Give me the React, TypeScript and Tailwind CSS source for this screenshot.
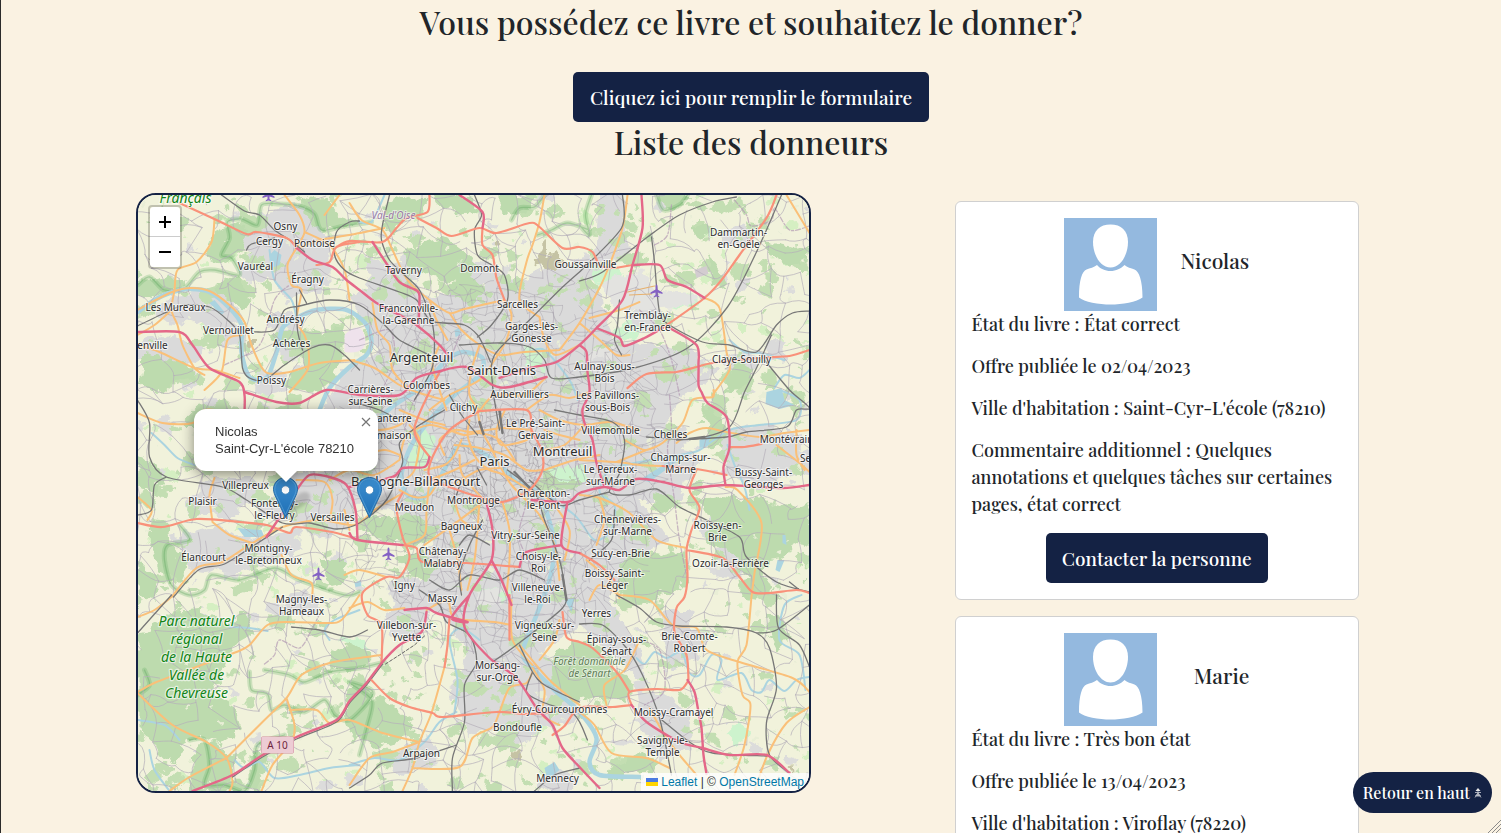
import React from "react";

type Point = [number, number];

const toPoints = (source: string): Point[] =>
  source.split(" ").map((pair) => pair.split(",").map(Number) as Point);

/** Smooth curve through all points (Catmull-Rom converted to cubic segments). */
const curve = (source: string): string => {
  const p = toPoints(source);
  let d = `M${p[0][0]},${p[0][1]}`;
  for (let i = 0; i < p.length - 1; i++) {
    const a = p[Math.max(0, i - 1)];
    const b = p[i];
    const c = p[i + 1];
    const e = p[Math.min(p.length - 1, i + 2)];
    d += `C${(b[0] + (c[0] - a[0]) / 7).toFixed(1)},${(b[1] + (c[1] - a[1]) / 7).toFixed(1)} ${(c[0] - (e[0] - b[0]) / 7).toFixed(1)},${(c[1] - (e[1] - b[1]) / 7).toFixed(1)} ${c[0]},${c[1]}`;
  }
  return d;
};

const curves = (sources: string[]) => sources.map(curve).join("");
const shapes = (sources: string[]) => sources.map((s) => `M${s.split(" ").join("L")}Z`).join("");

const makeRandom = (seed: number) => () => {
  seed = (seed * 1664525 + 1013904223) % 4294967296;
  return seed / 4294967296;
};

/* ---------- Map data ---------- */

const motorways = [
  "297,248 313,260 333,267 347,280 360,290 377,303 400,315 417,325 440,345 450,358",
  "460,195 483,212 483,228",
  "373,242 386,262 400,282 418,291 420,300 419,325",
  "642,195 643,228 633,265 623,300 597,328 580,345 557,362 530,368 500,378",
  "580,345 587,352 588,372 590,392 583,410 585,423 593,440 597,463 605,487",
  "633,265 660,265 668,280 687,287 705,298",
  "663,328 645,338 625,346 620,338 597,328",
  "670,328 697,345 699,365 699,385 702,392 708,403 727,417 730,447 724,467 726,485",
  "138,332 180,332 193,345 210,368 240,382 245,395 245,412",
  "245,392 277,402 300,403 327,390 360,395 400,395 417,378 437,372 467,367 493,385 510,387 547,377",
  "297,490 310,475 330,477 347,485 356,510 358,540",
  "350,487 393,477 403,468 425,467 430,457",
  "283,513 275,525 267,537",
  "350,533 358,540 403,545",
  "487,503 493,530 492,560 470,595 465,627 490,658 517,678 537,708 553,725 563,748 580,767 600,788",
  "492,560 502,580 512,605",
  "470,595 452,618 468,622 437,613 427,608 405,610",
  "427,612 422,632 400,645 383,662 367,683 350,701 337,720 297,737 263,755 233,775 193,791",
  "532,500 568,502 580,493 605,487 620,490 637,479 663,482 690,488 726,485 783,488 810,485",
  "568,502 562,545 580,553",
  "562,545 527,552 520,567",
  "688,680 695,692 699,712 702,728 704,755 707,774",
  "632,705 647,722 680,742 703,748 730,755 767,755 790,773",
];

const trunks = [
  "180,203 217,220 247,234 257,232 287,238 297,248",
  "360,242 337,247 330,262 317,265",
  "337,247 350,241 383,242 397,228 407,218 428,212 430,195",
  "418,218 437,228 452,236 480,228 497,233 530,223 540,227 563,248 580,247 593,252 600,265 613,268 633,265",
  "483,228 483,245 493,255 497,278 505,300",
  "777,195 767,218 740,255 722,280 705,298 663,328",
  "810,350 790,356 760,358 713,363 697,367 677,372 647,374 628,388",
  "480,411 527,410 532,430 542,450 543,470 530,490 503,502 483,498 450,487 430,477 433,457 450,430 480,411",
  "430,457 415,428 440,372",
  "138,523 163,527 197,519 240,522 267,525 290,533 297,527 337,533 360,540",
  "403,545 417,548 423,562 467,563 520,567",
  "403,493 397,507 403,537 410,557 400,577 387,577 363,593 368,615 382,625 382,662",
  "372,680 390,698 410,707 433,713 443,717 497,712 527,714 553,712",
  "553,735 565,726 580,708 613,707 632,705",
  "632,705 630,692 657,689 680,690 688,682",
  "630,692 617,672 593,648 580,642 567,637 563,612",
  "450,618 448,645 445,667",
  "663,466 697,469 727,475",
  "697,470 690,490 700,508 692,530 687,550 688,577 685,597 677,608 675,632 687,655 689,680",
  "687,550 723,558 740,577 753,592 770,593 797,590 810,593",
  "730,447 745,447 762,444",
  "510,595 510,640",
  "580,553 600,565 615,580",
];

const primaries = [
  "215,219 212,242 197,262 178,270 175,290 172,310 178,325 183,345 195,368 205,375",
  "138,310 170,293 190,288 210,291 230,305 245,322 252,345 266,372 290,372 320,363 355,360",
  "285,195 300,215 305,232 297,248 288,265 292,285 302,290 297,320 305,335 309,350 308,370 290,392",
  "305,232 330,245 345,270 350,300",
  "300,248 320,240 350,235 385,228",
  "325,215 340,195",
  "350,203 362,220 383,230 393,250 408,280 430,300 450,313 465,309 505,300",
  "545,195 540,222 533,245 527,262 520,300 540,317",
  "628,195 623,228 610,265 600,288 580,323 560,350",
  "705,298 720,308 727,352 730,370 713,395",
  "787,195 810,233",
  "138,335 155,325 172,310",
  "138,345 160,352 195,368 215,370 240,378",
  "242,335 228,340 222,372 205,390",
  "450,313 462,330 480,345 500,355 525,352 560,350",
  "505,300 512,315 507,340 495,360 480,380 450,395 430,410",
  "440,345 433,365 440,390 447,410",
  "480,345 472,370 470,395 480,411",
  "540,317 545,340 556,355 580,345",
  "350,360 375,368 400,385 420,393 445,400",
  "373,303 378,330 390,345 393,370 410,390",
  "430,300 437,320 448,340",
  "580,323 600,340 617,355 630,355",
  "590,318 620,310 640,302",
  "138,413 163,423 193,423 205,410 230,412",
  "138,497 152,510 148,520",
  "213,522 210,495 215,478",
  "213,522 230,535 253,543",
  "172,597 197,568 223,562 253,543 283,527 320,520 355,525 375,510 400,495",
  "297,480 325,482 333,500 330,520",
  "330,480 350,470 375,475 400,460",
  "400,460 407,435 430,425 450,430",
  "410,425 420,440 415,470 405,480",
  "450,430 465,435 480,433 500,440 515,460",
  "455,445 480,448 505,455 527,470 543,470",
  "460,455 463,475 487,503",
  "478,411 482,430 490,445 500,465 512,485 540,515 555,545 560,580",
  "505,411 497,430 502,445 527,440 532,430",
  "440,478 430,495 415,497 400,490",
  "450,487 465,478 480,470 500,468",
  "425,470 445,465 455,455 462,440",
  "430,480 455,470 475,460",
  "480,500 478,530 475,560 468,590",
  "503,502 510,530 510,560 507,595",
  "430,480 427,510 425,535 405,545",
  "450,530 458,560 462,590",
  "350,608 368,602 385,610 405,608",
  "345,575 360,570 387,577",
  "350,530 345,510",
  "425,545 460,520 480,505",
  "427,610 448,600 455,618 495,622 512,625",
  "512,600 513,640 533,665",
  "445,455 440,440 455,430 470,432 488,430 505,428 532,430",
  "470,445 478,460 490,470 505,475 530,490",
  "470,420 468,435 472,448",
  "455,500 462,520 480,530",
  "540,410 560,420 585,425 610,422 640,430",
  "400,410 425,420 445,425",
  "350,425 380,430 400,425 412,415",
  "360,455 385,450 400,455",
  "545,430 560,435 580,440",
  "138,693 173,725 207,742 227,758 233,782 230,791",
  "227,758 263,722 287,698 302,675 330,663 360,658 382,655",
  "287,698 295,725 292,742 273,765 262,791",
  "290,710 317,710 330,723 350,720 383,733 420,742",
  "138,692 157,682 197,667 237,652 250,645 268,625 290,622 327,623 342,620 360,595",
  "170,791 190,777 227,758",
  "138,617 155,610 172,597",
  "282,555 292,575 312,583 312,600",
  "445,667 432,713 420,742 413,768 403,791",
  "350,785 370,758 393,752 420,742",
  "413,768 460,767 473,738 493,727 500,712 510,688 527,683 533,672",
  "520,645 550,680 580,705",
  "540,660 555,640 560,620",
  "533,668 545,690 543,715 560,725",
  "687,548 657,540 630,513 600,498 580,495",
  "726,487 738,490 762,523 755,573 752,597 747,645 738,662 743,695 751,705 745,745 735,775",
  "617,462 647,450 663,443 683,423 693,400 713,397 714,390",
  "580,460 617,462 640,465 663,466",
  "677,443 690,433 707,428 727,432 760,437 785,433 810,430",
  "777,445 800,463 810,472",
  "797,430 797,455 805,470",
  "620,595 650,600 673,625 697,628 707,650 740,662 793,678 810,692",
  "810,707 787,723 768,755 755,791",
  "580,712 595,725 612,753 647,758 670,768",
  "650,708 665,735 680,755 697,775",
  "607,705 605,685 625,670 640,640",
  "590,600 600,585 620,595",
  "587,560 610,580 620,598",
  "545,470 575,460 600,455",
  "530,490 550,500 570,530 565,560",
  "542,450 565,445 585,425",
  "625,440 645,450 660,445",
  "527,410 550,395 570,398 590,392",
  "480,411 495,395 525,395 547,377",
  "600,498 605,520 597,545",
];

const railways = [
  "222,195 245,211 260,215 275,230 290,240 305,252",
  "360,221 350,222 337,232 335,255 345,270 360,278 400,292 417,300 430,320 445,323 465,325 478,335 485,348 491,362",
  "247,250 252,244 275,238",
  "138,326 165,313 185,305 210,307 228,320 240,335 243,368 250,378 265,380 285,365 312,348 330,345 345,355 360,370",
  "255,332 275,330 285,310 300,306 330,300 360,305 385,325 400,340 430,355",
  "297,293 298,330 303,350",
  "300,290 307,303",
  "390,195 383,225 382,240 390,260 405,275 420,290 432,320 435,345 432,370 415,400",
  "475,195 482,215 475,230 478,255 492,265 505,275 508,300 492,325 478,337",
  "580,272 560,290 530,320 495,355 493,385 500,430",
  "460,345 500,343 530,347 545,360 552,378 580,377 635,368 688,348 728,307 757,252 782,195",
  "623,195 622,228 580,272",
  "580,281 603,272 648,237 680,215 713,202 737,197",
  "652,237 655,262 660,312 670,325 703,342 730,345 757,352 777,325 793,313 810,311",
  "772,335 757,368 745,392 730,427 693,439 647,437",
  "765,360 790,390 810,408 797,410 787,427 747,432 727,437 677,440",
  "620,300 618,325 615,340 622,355",
  "138,400 150,423 150,457 167,477 223,487 247,500 283,523 310,523 337,529 360,523 387,500 403,463 400,443 417,427 445,410",
  "167,477 155,485 152,510 138,515",
  "174,597 199,570 225,564 255,545 283,527",
  "353,402 380,410 400,420",
  "450,395 462,415 478,435",
  "500,411 503,433",
  "555,410 580,415 613,422 625,440 620,473 610,492 630,495 657,489 680,507 707,520 740,537 747,557 777,582 810,592",
  "487,485 478,468",
  "508,470 535,492 545,520 560,560 565,590 563,608 517,645 493,662",
  "530,480 560,505 580,500 610,492",
  "457,495 462,480",
  "483,520 470,545 460,575 462,595",
  "460,545 470,535 490,545",
  "430,580 450,590 470,575 500,580 520,570 545,580",
  "172,595 138,633",
  "292,627 320,630 350,637 368,630",
  "453,791 453,758 465,722 465,685 477,662 470,635 447,622 440,605 420,590",
  "350,788 370,775 383,763 417,758 457,745",
  "520,645 533,672 545,685 580,702",
  "533,672 527,692 543,702 575,715 588,740",
  "580,624 603,625 627,648 643,675 660,718 672,775",
  "617,595 640,608 657,622 680,626 727,627 757,633 770,648 777,688 767,722 770,755 790,773",
  "810,605 777,630 757,633",
  "777,595 779,628 800,645 810,667",
  "660,718 690,742 713,753 767,756",
  "383,664 367,685 350,703 337,722 297,739 263,757 233,777",
  "535,791 555,775 580,768",
  "615,510 612,540 590,560",
  "790,582 800,590",
];

const railYards = ["480,422 484,434", "500,411 503,433", "515,472 530,488", "690,439 705,437", "563,575 567,600"];

const rivers = [
  "138,312 155,300 170,293 190,289 210,292 230,308 242,325 242,352 250,377 267,378 277,352 283,328 297,318 317,310 343,309 355,314 367,325 372,342 367,355 350,367 330,388 320,410",
  "517,482 500,465 478,450 460,445 450,460 440,478 425,497 408,495 402,475 412,445 432,418 455,395 480,375 483,358 463,352 445,362 425,385 395,405 372,425",
  "517,482 540,492 555,500",
  "540,492 548,515 555,545 550,580 537,615 523,652 533,668 555,690 580,712 597,738 590,762 600,775 640,777",
];

const smallRivers = [
  "540,492 575,515 595,540 612,530 615,505 600,492 610,470 640,462 680,455 700,450 730,430 760,425 797,420 800,400 780,390",
  "775,388 785,375 800,378 810,370",
  "637,658 645,664 655,652 667,658 682,652 690,673 700,675 712,655 722,660 718,680 742,673 752,690 762,692 770,680 785,691 797,680 810,677",
  "270,250 275,280 292,300 297,318",
  "152,433 165,445 178,458 195,465",
  "230,627 250,628 268,631",
  "138,720 165,725 180,740",
  "235,760 245,768 260,762 275,778 300,775 330,768 360,765",
  "350,765 375,758 400,760 425,742 440,722 457,712",
  "480,640 462,628 450,640 458,680 455,712",
  "360,610 335,620 325,630 330,640",
  "802,595 785,605 780,640 800,655 806,690",
  "360,222 372,222 385,195",
  "730,340 745,352 760,353 785,360",
  "728,445 735,465 745,487 750,510",
  "530,352 545,350 570,380 578,400",
  "150,750 155,770 170,791",
];

const lakes = [
  "270,255 275,250 282,255 280,265 272,268",
  "767,392 782,388 785,400 795,405 780,409 766,404",
  "238,528 262,530 265,537 245,537",
  "785,560 780,572 776,570 778,560",
  "455,330 460,328 461,335 456,337",
  "355,583 361,580 362,586 356,587",
  "545,768 555,762 560,770 548,780",
  "215,300 225,312 222,315 210,303",
  "640,480 680,455 690,452 650,482",
  "700,440 712,435 708,446 700,448",
  "783,535 786,535 787,545 783,543",
  "565,600 575,598 572,612",
];

const forests = [
  "225,280 238,276 250,296 243,310 225,300 215,283",
  "268,335 290,328 320,333 345,326 345,352 335,380 320,392 290,390 285,380 305,370 300,350 285,345",
  "140,282 160,277 190,282 175,290 150,298 138,295",
  "145,353 165,358 185,362 195,378 175,382 160,395 140,380",
  "405,255 425,243 445,237 470,255 482,268 462,285 445,280 430,272 408,266",
  "385,206 400,197 428,198 425,212 407,218 392,235 383,225",
  "435,195 462,195 475,202 480,215 460,212 440,205",
  "452,285 465,275 482,284 485,293 470,303 455,298",
  "508,280 520,285 518,295 506,290",
  "500,195 535,197 530,207 515,215 500,208",
  "660,195 690,195 685,205 670,210 662,205",
  "764,240 790,247 810,245 808,260 790,266 770,255",
  "693,228 710,222 715,230 700,238",
  "708,252 722,272 728,290 715,285",
  "138,454 152,460 165,478 157,495 140,488",
  "152,520 170,522 172,545 190,560 180,580 160,570 150,545",
  "376,515 400,518 410,513 425,522 440,525 438,540 415,545 375,540 362,525",
  "398,558 420,550 440,565 428,580 415,578",
  "540,470 560,468 585,478 575,490 548,488",
  "655,492 675,497 680,505 668,515 653,505",
  "700,500 722,495 745,500 760,498 790,508 810,500 810,545 795,542 785,558 770,560 760,580 745,575 738,555 720,548 705,545 712,520",
  "620,562 640,548 665,555 685,550 690,585 665,597 640,605 618,590",
  "700,403 720,415 727,430 722,445 703,448 710,425",
  "725,380 740,360 755,370 745,385 730,392",
  "138,640 150,625 175,612 200,610 230,625 245,610 255,635 232,648 225,665 212,690 235,705 243,730 222,745 200,735 182,745 178,765 160,755 150,735 138,730",
  "195,745 215,742 235,758 232,780 250,785 250,755 270,755 258,790 190,791",
  "550,658 575,642 592,640 612,660 632,685 628,702 600,697 575,702 553,685",
  "363,700 385,697 405,718 415,725 400,742 372,747 360,735",
  "605,770 625,762 640,752 660,760 655,775 640,770 610,782",
  "765,615 785,620 790,640 778,650 770,635",
  "738,580 765,575 770,590 758,600 742,597",
  "330,425 345,430 360,440 355,455 335,450",
  "320,560 345,560 350,580 330,585",
  "138,560 160,580 155,600 138,595",
  "330,650 360,640 372,662 355,672 330,668",
  "180,425 200,405 225,400 232,412 215,425",
  "255,420 290,400 310,412 300,425 270,430",
  "350,682 372,690 368,720 355,742 345,720",
  "600,418 615,424 618,432 600,432",
  "300,195 325,200 340,215 365,222 345,228 322,232 305,215",
  "215,235 240,222 250,232 240,255 220,262 205,255",
];

const parks = [
  "410,445 425,430 436,440 432,458 420,472 410,465",
  "525,345 540,347 545,370 528,368",
  "593,270 620,270 625,282 600,285",
  "660,300 690,292 700,303 680,310 655,306",
  "480,590 510,588 505,600 480,603",
  "725,735 740,720 750,735 735,745",
  "545,468 580,465 590,480 560,480",
  "338,640 360,636 370,650",
  "610,335 630,320 642,328 635,340",
];

const urban = [
  "350,298 390,275 440,300 480,262 520,282 560,260 600,290 615,340 690,350 720,370 680,400 660,440 700,460 680,500 640,500 670,540 620,565 610,600 640,650 650,690 620,660 580,625 545,650 580,700 560,730 520,720 470,735 450,690 470,650 435,610 400,600 440,560 430,530 370,500 320,520 310,485 360,470 350,430 330,400 345,370 380,350",
  "255,215 300,205 330,240 330,285 290,300 265,270 240,245",
  "138,355 175,335 205,350 195,365 160,360",
  "172,538 215,525 250,540 300,530 305,548 240,575 200,565",
  "280,475 340,470 355,520 320,540 290,520",
  "200,480 235,478 250,500 230,520 200,510",
  "170,295 225,290 240,320 215,330 185,318",
  "395,600 435,600 430,620 400,640 385,625",
  "635,680 690,710 690,750 660,760 640,725",
  "715,430 780,425 800,450 810,470 760,485 730,475",
  "720,545 750,550 740,575 715,565",
  "660,610 690,610 700,660 670,670",
  "385,755 430,735 440,765 400,775",
  "600,190 625,190 630,260 595,265",
  "765,342 785,340 787,358 768,362",
  "650,365 700,375 695,390 650,395",
  "365,255 400,265 420,290 370,290",
];

const airfields = [
  "600,283 645,270 655,290 700,296 690,307 620,312",
  "590,350 612,348 612,358 590,360",
  "475,592 505,588 500,603 478,605",
];

const parkBorders = [
  "138,285 150,277 165,290 185,288 200,272 215,270 240,275 232,258 222,255 230,238 228,222 242,219 258,225 262,205 280,204 300,206 315,214 322,230 345,226 372,222",
  "180,525 190,540 168,545 165,560 172,585 190,595 205,590 212,575 240,580 275,568 300,580 345,595 360,592",
  "250,672 252,690 268,694 272,710 285,705 305,712 325,700 335,715 350,720 370,700 372,690 350,682",
  "190,740 205,740 210,765 205,785 225,785 245,791 255,770 258,745 285,735",
  "265,670 290,675 305,682 330,672 360,668 385,662",
  "512,220 520,208 535,207 545,195",
  "538,235 552,230 568,223 590,230",
  "657,195 664,210 680,205 688,195",
  "580,225 590,235 586,215 592,195",
  "350,683 372,700 368,725 360,755",
  "138,695 150,685 145,670",
];

const boundaries = [
  "735,200 747,215 752,226 772,220 775,208 790,230 810,226",
  "655,245 668,235 672,205",
  "640,310 660,330 672,360 680,395",
  "265,664 275,655 280,640 300,648 312,630 322,610",
  "670,395 672,430 668,450 675,500 680,540 688,580",
  "225,365 260,345 275,300 290,285",
  "580,398 575,440 580,470",
  "640,640 660,650 665,690 645,705",
  "360,340 390,330 395,360 385,385",
  "460,335 450,360 435,380 415,400 405,430",
  "538,470 525,510 520,540 540,580",
];

const browns = [
  "543,243 548,241 549,258 557,252 563,262 557,270 537,266 538,255",
  "495,240 501,243 497,247 492,244",
  "512,750 523,751 521,758 512,757",
  "247,338 255,338 254,348 248,346",
  "787,768 791,764 792,772",
];

interface PlaceLabel {
  x: number;
  y: number;
  lines: string[];
  city?: boolean;
}

const place = (x: number, y: number, ...lines: string[]): PlaceLabel => ({ x, y, lines });
const city = (x: number, y: number, ...lines: string[]): PlaceLabel => ({ x, y, lines, city: true });

const places: PlaceLabel[] = [
  place(286, 226, "Osny"),
  place(270, 241, "Cergy"),
  place(315, 243, "Pontoise"),
  place(256, 266, "Vauréal"),
  place(308, 279, "Éragny"),
  place(176, 307, "Les Mureaux"),
  place(286, 319, "Andrésy"),
  place(229, 330, "Vernouillet"),
  place(292, 343, "Achères"),
  place(153, 345, "enville"),
  place(272, 380, "Poissy"),
  place(404, 270, "Taverny"),
  place(480, 268, "Domont"),
  place(586, 264, "Goussainville"),
  place(739, 232, "Dammartin-", "en-Goële"),
  place(518, 304, "Sarcelles"),
  place(409, 308, "Franconville-", "la-Garenne"),
  place(532, 326, "Garges-lès-", "Gonesse"),
  place(648, 315, "Tremblay-", "en-France"),
  place(742, 359, "Claye-Souilly"),
  city(422, 358, "Argenteuil"),
  city(502, 371, "Saint-Denis"),
  place(605, 366, "Aulnay-sous-", "Bois"),
  place(427, 385, "Colombes"),
  place(371, 389, "Carrières-", "sur-Seine"),
  place(520, 394, "Aubervilliers"),
  place(608, 395, "Les Pavillons-", "sous-Bois"),
  place(464, 407, "Clichy"),
  place(391, 418, "Nanterre"),
  place(386, 435, "Malmaison"),
  place(536, 423, "Le Pré-Saint-", "Gervais"),
  place(611, 430, "Villemomble"),
  place(671, 434, "Chelles"),
  place(787, 439, "Montévrain"),
  city(563, 452, "Montreuil"),
  city(495, 462, "Paris"),
  place(681, 457, "Champs-sur-", "Marne"),
  place(611, 469, "Le Perreux-", "sur-Marne"),
  place(764, 472, "Bussy-Saint-", "Georges"),
  place(814, 458, "Serris"),
  city(416, 482, "Boulogne-Billancourt"),
  place(246, 485, "Villepreux"),
  place(203, 501, "Plaisir"),
  place(275, 503, "Fontenay-", "le-Fleury"),
  place(333, 517, "Versailles"),
  place(415, 507, "Meudon"),
  place(474, 500, "Montrouge"),
  place(544, 493, "Charenton-", "le-Pont"),
  place(462, 526, "Bagneux"),
  place(526, 535, "Vitry-sur-Seine"),
  place(628, 519, "Chennevières-", "sur-Marne"),
  place(718, 525, "Roissy-en-", "Brie"),
  place(204, 557, "Élancourt"),
  place(269, 548, "Montigny-", "le-Bretonneux"),
  place(443, 551, "Châtenay-", "Malabry"),
  place(539, 556, "Choisy-le-", "Roi"),
  place(621, 553, "Sucy-en-Brie"),
  place(615, 573, "Boissy-Saint-", "Léger"),
  place(731, 563, "Ozoir-la-Ferrière"),
  place(405, 585, "Igny"),
  place(443, 598, "Massy"),
  place(538, 587, "Villeneuve-", "le-Roi"),
  place(302, 599, "Magny-les-", "Hameaux"),
  place(597, 613, "Yerres"),
  place(407, 625, "Villebon-sur-", "Yvette"),
  place(545, 625, "Vigneux-sur-", "Seine"),
  place(617, 639, "Épinay-sous-", "Sénart"),
  place(690, 636, "Brie-Comte-", "Robert"),
  place(498, 665, "Morsang-", "sur-Orge"),
  place(560, 709, "Évry-Courcouronnes"),
  place(518, 727, "Bondoufle"),
  place(674, 712, "Moissy-Cramayel"),
  place(663, 740, "Savigny-le-", "Temple"),
  place(422, 753, "Arpajon"),
  place(558, 778, "Mennecy"),
];

/* ---------- Generated texture ---------- */

const streetGrid = (
  seed: number,
  step: number,
  keep: number,
  inside: (x: number, y: number) => boolean,
): string => {
  const random = makeRandom(seed);
  const cols = Math.ceil(700 / step);
  const rows = Math.ceil(620 / step);
  const node: Point[][] = [];
  for (let r = 0; r <= rows; r++) {
    node.push([]);
    for (let c = 0; c <= cols; c++) {
      node[r].push([130 + (c + random() * 0.9) * step, 188 + (r + random() * 0.9) * step]);
    }
  }
  let d = "";
  const link = (a: Point, b: Point) => {
    if (!inside(a[0], a[1])) return;
    const mx = (a[0] + b[0]) / 2 + (random() - 0.5) * step * 0.7;
    const my = (a[1] + b[1]) / 2 + (random() - 0.5) * step * 0.7;
    d += `M${a[0].toFixed(1)},${a[1].toFixed(1)}Q${mx.toFixed(1)},${my.toFixed(1)} ${b[0].toFixed(1)},${b[1].toFixed(1)}`;
  };
  for (let r = 0; r < rows; r++) {
    for (let c = 0; c < cols; c++) {
      if (random() < keep) link(node[r][c], node[r][c + 1]);
      if (random() < keep) link(node[r][c], node[r + 1][c]);
      if (random() < keep * 0.2) link(node[r][c], node[r + 1][c + 1]);
    }
  }
  return d;
};

const scatter = (seed: number, count: number, min: number, max: number): string => {
  const random = makeRandom(seed);
  let d = "";
  for (let i = 0; i < count; i++) {
    const cx = 138 + random() * 672;
    const cy = 195 + random() * 596;
    const radius = min + random() * random() * (max - min);
    const corners = 6;
    for (let k = 0; k < corners; k++) {
      const angle = (k / corners) * Math.PI * 2;
      const reach = radius * (0.5 + random() * 0.8);
      d += `${k ? "L" : "M"}${(cx + Math.cos(angle) * reach * 1.3).toFixed(1)},${(cy + Math.sin(angle) * reach).toFixed(1)}`;
    }
    d += "Z";
  }
  return d;
};

const nearParis = (rx: number, ry: number) => (x: number, y: number) =>
  ((x - 495) / rx) ** 2 + ((y - 465) / ry) ** 2 < 1;

const countryStreets = streetGrid(7, 19, 0.62, () => true);
const suburbStreets = streetGrid(21, 10, 0.6, nearParis(165, 185));
const cityStreets = streetGrid(33, 7, 0.62, nearParis(60, 55));
const smallWoods = scatter(5, 760, 2, 12);
const meadows = scatter(11, 480, 1, 7);
const hamlets = scatter(17, 240, 2, 9);
const clearings = scatter(29, 200, 1, 5);

function Plane({ x, y }: { x: number; y: number }) {
  return (
    <path
      transform={`translate(${x} ${y})`}
      fill="#8461c4"
      d="M0,-6.5C.9,-6.5 1,-5 1,-3.6V-1.6L6,1.6V3L1,1.4V4L2.8,5.4V6.3L0,5.6L-2.8,6.3V5.4L-1,4V1.4L-6,3V1.6L-1,-1.6V-3.6C-1,-5 -.9,-6.5 0,-6.5Z"
    />
  );
}

function MapCanvas() {
  return (
    <svg
      className="block h-full w-full font-['Noto_Sans',sans-serif]"
      viewBox="138 195 672 596"
      preserveAspectRatio="xMidYMid slice"
      role="img"
      aria-label="Carte des donneurs autour de Paris"
    >
      <defs>
        <filter id="ragged" x="-5%" y="-5%" width="110%" height="110%">
          <feTurbulence type="fractalNoise" baseFrequency="0.09" numOctaves="3" seed="4" />
          <feDisplacementMap in="SourceGraphic" scale="13" xChannelSelector="R" yChannelSelector="G" />
        </filter>
      </defs>
      <rect x="138" y="195" width="672" height="596" fill="#f1f2db" />
      <g filter="url(#ragged)">
        <path d={meadows} fill="#d5efc2" />
        <path d={hamlets} fill="#dcdcdb" />
        <path d={shapes(urban)} fill="#dadada" />
        {places.map((p) => (
          <ellipse
            key={p.lines[0]}
            cx={p.x}
            cy={p.y + 4}
            rx={p.city ? 26 : 17}
            ry={p.city ? 18 : 12}
            fill="#dadada"
          />
        ))}
        <path d={smallWoods} fill="#c3deb2" />
        <path d={shapes(forests)} fill="#bddbae" />
        <path d={shapes(parks)} fill="#cdf3cd" />
        <path d={shapes(airfields)} fill="#e3e3e0" />
        <path d={clearings} fill="#e9eed6" />
        <ellipse cx="490" cy="458" rx="52" ry="45" fill="#d9d9d9" />
        <path d={shapes(browns)} fill="#c5c3a4" />
      </g>
      <path d="M345,335Q362,318 366,340Q366,355 345,352Z" fill="#efe2ec" />
      <path d="M695,270l12,-4l2,8l-12,4z" fill="#d3ccd0" />

      <g fill="none" strokeLinejoin="round" strokeLinecap="round">
        <path d={curves(parkBorders)} stroke="#5fae5f" strokeOpacity=".26" strokeWidth="5" />
        <path d={curves(parkBorders)} stroke="#4c9a50" strokeOpacity=".3" strokeWidth="1.3" />
        <path d={curves(smallRivers)} stroke="#abd4e0" strokeWidth="2" />
        <path d={curves(rivers)} stroke="#abd4e0" strokeWidth="4.5" />
        <path d={shapes(lakes)} fill="#abd4e0" />
        <path d={countryStreets} stroke="#b5afba" strokeWidth=".9" strokeOpacity=".8" />
        <path d={suburbStreets} stroke="#aaa6ad" strokeWidth=".7" strokeOpacity=".7" />
        <path d={cityStreets} stroke="#a5a0a5" strokeWidth=".7" strokeOpacity=".8" />
        <path d={curves(boundaries)} stroke="#b49ab4" strokeOpacity=".7" strokeWidth="1.3" strokeDasharray="5 2 2 2" />
        <path d={curves(primaries)} stroke="#fac079" strokeWidth="2" />
        <path d={curves(railways)} stroke="#777777" strokeWidth="1.3" />
        <path d={curves(railYards)} stroke="#777777" strokeWidth="2.4" />
        <path d={curves(trunks)} stroke="#f9917a" strokeWidth="2.2" />
        <path d={curves(motorways)} stroke="#e46788" strokeWidth="2.4" />
        <path d="M386,664L400,655L415,645L425,636" stroke="#666" strokeWidth="1" strokeDasharray="3 2" />
        <path d="M628,292L655,286M630,295L652,294" stroke="#e6b06e" strokeWidth="1.2" />
      </g>

      <Plane x={657} y={291} />
      <Plane x={269} y={195} />
      <Plane x={389} y={554} />
      <Plane x={319} y={574} />

      <g textAnchor="middle" strokeLinejoin="round" className="[paint-order:stroke]">
        <g fontSize="10" fill="#2d2d2d" stroke="#ffffff" strokeOpacity=".65" strokeWidth="2.2">
          {places
            .filter((p) => !p.city)
            .map((p) => (
              <text key={p.lines[0]}>
                {p.lines.map((line, i) => (
                  <tspan key={line} x={p.x} y={p.y + 4 + i * 12}>
                    {line}
                  </tspan>
                ))}
              </text>
            ))}
        </g>
        <g fontSize="13" fill="#2d2d2d" stroke="#ffffff" strokeOpacity=".65" strokeWidth="2.4">
          {places
            .filter((p) => p.city)
            .map((p) => (
              <text key={p.lines[0]} x={p.x} y={p.y + 4}>
                {p.lines[0]}
              </text>
            ))}
        </g>
        <g fontSize="14" fontStyle="italic" fill="#118417" stroke="#ffffff" strokeOpacity=".6" strokeWidth="2.4">
          <text x="186" y="203">Français</text>
          {["Parc naturel", "régional", "de la Haute", "Vallée de", "Chevreuse"].map((line, i) => (
            <text key={line} x="197" y={626 + i * 18}>
              {line}
            </text>
          ))}
        </g>
        <g fontSize="10" fontStyle="italic" stroke="#ffffff" strokeOpacity=".5" strokeWidth="2">
          <text x="394" y="219" fill="#9b7aa6">Val-d&apos;Oise</text>
          <g fill="#5f7d57">
            <text x="590" y="665">Forêt domaniale</text>
            <text x="590" y="677">de Sénart</text>
          </g>
        </g>
        <rect x="262" y="737" width="32" height="16" rx="1" fill="#edccd4" stroke="#d08a9d" />
        <text x="278" y="749" fontSize="10" fill="#6d2540">A 10</text>
      </g>
    </svg>
  );
}

function Marker({ label }: { label: string }) {
  return (
    <svg className="block h-[41px] w-[46px]" viewBox="0 0 46 41" role="img" aria-label={label}>
      <defs>
        <linearGradient id="pin" x1="0" y1="0" x2="0" y2="1">
          <stop offset="0" stopColor="#3c8fd1" />
          <stop offset="1" stopColor="#1f6fb5" />
        </linearGradient>
        <filter id="pinShadow" x="-30%" y="-30%" width="160%" height="160%">
          <feGaussianBlur stdDeviation="1.6" />
        </filter>
      </defs>
      <path d="M12,40C16,30 22,16 31,15C38,15 39,21 34,26C28,31 20,34 12,40Z" fill="#000" opacity=".15" filter="url(#pinShadow)" />
      <path
        d="M12.5,.5C5.6,.5 .5,5.8 .5,12.2C.5,15 1.6,17.6 3,20.5L12.5,40.5L22,20.5C23.4,17.6 24.5,15 24.5,12.2C24.5,5.8 19.4,.5 12.5,.5Z"
        fill="url(#pin)"
        stroke="#2a6ea6"
      />
      <path d="M12.5,1.8C6.4,1.8 1.8,6.5 1.8,12.2C1.8,14.8 2.8,17.2 4.2,20L12.5,37.5L20.8,20C22.2,17.2 23.2,14.8 23.2,12.2C23.2,6.5 18.6,1.8 12.5,1.8Z" fill="none" stroke="#6fb3e3" strokeOpacity=".5" />
      <circle cx="12.5" cy="13" r="4.2" fill="#fff" stroke="#2f7ab5" strokeWidth=".8" />
    </svg>
  );
}

function DonorMap() {
  return (
    <section
      aria-label="Carte"
      className="relative ml-[9%] h-[600px] w-[45%] overflow-hidden rounded-[20px] border-2 border-[#142244] font-['Liberation_Sans',Arial,sans-serif] font-normal"
    >
      <MapCanvas />

      <div className="absolute top-[10px] left-[10px] flex flex-col rounded-sm border-2 border-black/20 bg-clip-padding">
        <button type="button" aria-label="Zoom avant" className="flex size-[30px] items-center justify-center rounded-t-sm border-b border-[#cccccc] bg-white">
          <svg viewBox="0 0 14 14" className="size-[14px]">
            <path d="M7,1V13M1,7H13" stroke="#000" strokeWidth="2" />
          </svg>
        </button>
        <button type="button" aria-label="Zoom arrière" className="flex size-[30px] items-center justify-center rounded-b-sm bg-white">
          <svg viewBox="0 0 14 14" className="size-[14px]">
            <path d="M1,7H13" stroke="#000" strokeWidth="2" />
          </svg>
        </button>
      </div>

      <div className="absolute top-[282px] left-[135px]">
        <Marker label="Nicolas" />
      </div>
      <div className="absolute top-[282px] left-[219px]">
        <Marker label="Marie" />
      </div>

      <div className="absolute top-[214px] left-[56px] w-[184px] drop-shadow-[0_3px_7px_rgba(0,0,0,0.45)]">
        <div className="relative rounded-xl bg-white py-[14px] pl-[21px] text-[13px] leading-[17px] text-[#333333]">
          Nicolas
          <br />
          Saint-Cyr-L&apos;école 78210
          <button type="button" aria-label="Fermer" className="absolute top-px right-0 flex size-6 items-center justify-center">
            <svg viewBox="0 0 10 10" className="size-[10px]">
              <path d="M1,1L9,9M9,1L1,9" stroke="#757575" strokeWidth="1.2" />
            </svg>
          </button>
        </div>
        <svg viewBox="0 0 24 11" className="mx-auto block h-[11px] w-6">
          <path d="M1,0H23L12,11Z" fill="#fff" />
        </svg>
      </div>

      <div className="absolute right-0 bottom-0 flex items-center gap-[3px] bg-white/80 px-[5px] text-xs leading-[18px] text-[#333333]">
        <svg viewBox="0 0 12 8" className="h-2 w-3">
          <path fill="#4c7be1" d="M0,0H12V4H0z" />
          <path fill="#ffd500" d="M0,4H12V8H0z" />
        </svg>
        <span>
          <a href="#leaflet" className="text-[#0078a8]">Leaflet</a> | ©{" "}
          <a href="#openstreetmap" className="text-[#0078a8]">OpenStreetMap</a>
        </span>
      </div>
    </section>
  );
}

interface Donor {
  name: string;
  condition: string;
  date: string;
  town: string;
  comment: string;
}

const donors: Donor[] = [
  {
    name: "Nicolas",
    condition: "État correct",
    date: "02/04/2023",
    town: "Saint-Cyr-L'école (78210)",
    comment: "Quelques annotations et quelques tâches sur certaines pages, état correct",
  },
  {
    name: "Marie",
    condition: "Très bon état",
    date: "13/04/2023",
    town: "Viroflay (78220)",
    comment: "Livre en très bon état",
  },
];

function Avatar() {
  return (
    <svg viewBox="0 0 93 93" className="block size-[93px] shrink-0" aria-hidden="true">
      <path fill="#94b9df" d="M0,0H93V93H0z" />
      <path fill="#fff" d="M46.500,6.500C57,6.500 64,12.500 64,24C64,37 56.500,49.500 46.500,49.500C36.500,49.500 29,37 29,24C29,12.500 36,6.500 46.500,6.500Z" />
      <path fill="#fff" d="M33,47C36,50.500 41,53 46.500,53C52,53 57,50.500 60.500,47C63,49.500 67,50 70.500,51.500C75,53.500 78.500,62 78.500,79.500C73,84 58,86.500 46.500,86.500C35,86.500 20,84 15,79.500C15,62 18,53.500 22.500,51.500C26,50 30,49.500 33,47Z" />
    </svg>
  );
}

function DonorCard({ donor }: { donor: Donor }) {
  return (
    <article className="flex flex-col rounded-md border border-[#d0d0d0] bg-white p-4 text-[18px] leading-[27px]">
      <div className="mx-auto flex w-1/2 items-center justify-between">
        <Avatar />
        <h3 className="mb-2 text-[21px] leading-[27px]">{donor.name}</h3>
      </div>
      <div className="flex flex-col gap-[15px]">
        <p>{`État du livre : ${donor.condition}`}</p>
        <p>{`Offre publiée le ${donor.date}`}</p>
        <p>{`Ville d'habitation : ${donor.town}`}</p>
        <p>{`Commentaire additionnel : ${donor.comment}`}</p>
        <button type="button" className="mx-auto h-[50px] rounded-[5px] bg-[#142244] px-4 text-[19px] text-white">
          Contacter la personne
        </button>
      </div>
    </article>
  );
}

export default function App() {
  return (
    <div
      id="haut"
      className="h-screen overflow-y-auto border-l border-[#2b2b2b] bg-[#faf2e2] font-['Playfair_Display','Liberation_Serif',serif] font-medium text-[#212529] [scrollbar-width:none]"
    >
      <main className="flex flex-col pt-[2px]">
        <h2 className="text-center text-[32px] leading-10">Vous possédez ce livre et souhaitez le donner?</h2>
        <button type="button" className="mx-auto mt-[30px] h-[50px] rounded-[5px] bg-[#142244] px-[17px] text-[19px] text-white">
          Cliquez ici pour remplir le formulaire
        </button>
        <h2 className="text-center text-[32px] leading-10">Liste des donneurs</h2>
        <div className="mt-[31px] flex items-start justify-between">
          <DonorMap />
          <div className="mr-[9.2%] flex w-[27.5%] flex-col gap-4 px-1 py-2">
            {donors.map((donor) => (
              <DonorCard key={donor.name} donor={donor} />
            ))}
          </div>
        </div>
      </main>

      <a
        href="#haut"
        className="fixed right-[9px] bottom-5 flex h-[41px] items-center gap-1 rounded-full bg-[#142244] px-[10px] text-[16px] text-white"
      >
        Retour en haut
        <svg viewBox="0 0 8 10" className="h-[10px] w-2" aria-hidden="true">
          <path d="M4,0L6.500,3H1.500Z" fill="#e8e8e8" />
          <path d="M1,4.500H7M4,3V5M4,5L6.500,8H1.500Z M2,8L1,9.500M6,8L7,9.500" fill="#a9adb8" stroke="#c9ccd4" strokeWidth=".8" />
        </svg>
      </a>
      <svg viewBox="0 0 13 13" className="fixed right-0 bottom-0 size-[13px]" aria-hidden="true">
        <path d="M0,13L13,0M4,13L13,4M8,13L13,8" stroke="#8b8b8b" strokeWidth="1" />
      </svg>
    </div>
  );
}
